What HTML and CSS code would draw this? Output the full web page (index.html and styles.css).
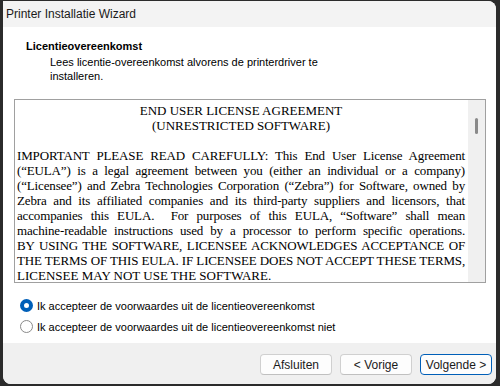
FILE: index.html
```html
<!DOCTYPE html>
<html lang="nl">
<head>
    <meta charset="UTF-8">
    <meta name="viewport" content="width=device-width, initial-scale=1.0">
    <title>Printer Installatie Wizard</title>
    <link rel="stylesheet" href="styles.css">
</head>
<body>
    <div class="window">
        <div class="titlebar">Printer Installatie Wizard</div>

        <div class="content">
            <div class="header">
                <div class="heading">Licentieovereenkomst</div>
                <div class="subtext">Lees licentie-overeenkomst alvorens de printerdriver te<br>installeren.</div>
            </div>

            <div class="license">
                <div class="license-text">
                    <div class="center">END USER LICENSE AGREEMENT</div>
                    <div class="center">(UNRESTRICTED SOFTWARE)</div>
                    <div class="blank"></div>
                    <div class="line">IMPORTANT PLEASE READ CAREFULLY: This End User License Agreement</div>
                    <div class="line">(“EULA”) is a legal agreement between you (either an individual or a company)</div>
                    <div class="line">(“Licensee”) and Zebra Technologies Corporation (“Zebra”) for Software, owned by</div>
                    <div class="line">Zebra and its affiliated companies and its third-party suppliers and licensors, that</div>
                    <div class="line">accompanies this EULA.&nbsp; For purposes of this EULA, “Software” shall mean</div>
                    <div class="line">machine-readable instructions used by a processor to perform specific operations.</div>
                    <div class="line">BY USING THE SOFTWARE, LICENSEE ACKNOWLEDGES ACCEPTANCE OF</div>
                    <div class="line">THE TERMS OF THIS EULA. IF LICENSEE DOES NOT ACCEPT THESE TERMS,</div>
                    <div class="last">LICENSEE MAY NOT USE THE SOFTWARE.</div>
                </div>
                <div class="scrollbar"><div class="thumb"></div></div>
            </div>

            <div class="choices">
                <label class="choice"><span class="radio checked"></span>Ik accepteer de voorwaardes uit de licentieovereenkomst</label>
                <label class="choice"><span class="radio"></span>Ik accepteer de voorwaardes uit de licentieovereenkomst niet</label>
            </div>
        </div>

        <div class="footer">
            <button class="btn">Afsluiten</button>
            <button class="btn">&lt; Vorige</button>
            <button class="btn default">Volgende &gt;</button>
        </div>
    </div>
</body>
</html>
```

FILE: styles.css
```css
html, body {
    margin: 0;
    height: 100%;
}
body {
    background: #2b2b2b;
    padding: 1px 4px 2px 3px;
    box-sizing: border-box;
    font-family: "Liberation Sans", Arial, sans-serif;
    font-size: 11px;
    color: #000;
}
.window {
    height: 100%;
    display: flex;
    flex-direction: column;
    background: #fff;
    border-radius: 0 8px 8px 8px;
    overflow: hidden;
}
.titlebar {
    height: 26px;
    line-height: 26px;
    padding-left: 3px;
    background: #f3f3f3;
    font-size: 12px;
    color: #1a1a1a;
}
.content {
    flex: 1;
    background: #fff;
}
.header {
    padding: 13px 0 0 23px;
}
.heading {
    font-weight: bold;
    line-height: 13px;
}
.subtext {
    margin: 2px 0 0 24px;
    line-height: 14px;
}
.license {
    display: flex;
    margin: 16px 10px 0 11px;
    height: 182px;
    border: 1px solid #a0a0a0;
}
.license-text {
    flex: 1;
    padding: 3px 3px 0 2px;
    overflow: hidden;
    font-family: "Liberation Serif", "Times New Roman", serif;
    font-size: 13px;
    line-height: 15px;
}
.center { text-align: center; }
.blank { height: 15px; }
.line {
    text-align: justify;
    text-align-last: justify;
    letter-spacing: -0.15px;
}
.last { text-align: left; }
.scrollbar {
    width: 17px;
    background: #f0f0f0;
    display: flex;
    justify-content: center;
}
.thumb {
    width: 3px;
    height: 16px;
    margin-top: 18px;
    background: #8a8a8a;
    border-radius: 2px;
}
.choices {
    margin: 12px 0 0 17px;
}
.choice {
    display: flex;
    align-items: center;
    height: 21px;
}
.radio {
    width: 11px;
    height: 11px;
    border: 1px solid #8a8a8a;
    border-radius: 50%;
    background: #fff;
    margin-right: 4px;
    box-sizing: content-box;
}
.radio.checked {
    width: 5px;
    height: 5px;
    border: 4px solid #005fb8;
}
.footer {
    height: 41px;
    background: #f0f0f0;
    display: flex;
    justify-content: flex-end;
    align-items: flex-start;
    gap: 8px;
    padding: 11px 4px 0 0;
    box-sizing: border-box;
}
.btn {
    width: 72px;
    height: 21px;
    padding: 0;
    border: 1px solid #d0d0d0;
    border-bottom-color: #c0c0c0;
    border-radius: 4px;
    background: #fdfdfd;
    font-family: "Liberation Sans", Arial, sans-serif;
    font-size: 12px;
    color: #1a1a1a;
}
.btn.default {
    border-color: #005fb8;
}
```
